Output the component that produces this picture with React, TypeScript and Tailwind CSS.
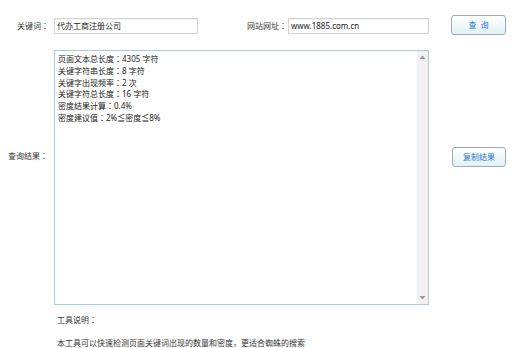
import React from "react";

const font = { fontFamily: '"Noto Sans", "Noto Sans CJK SC", sans-serif' };

function T({ s }: { s: string }) {
  const parts = s.split("：");
  return (
    <>
      {parts.map((p, i) => (
        <React.Fragment key={i}>
          {p}
          {i < parts.length - 1 && (
            <span style={{ fontFamily: '"Noto Sans CJK JP", sans-serif' }}>：</span>
          )}
        </React.Fragment>
      ))}
    </>
  );
}

export default function App() {
  const lines = [
    "页面文本总长度：4305 字符",
    "关键字符串长度：8 字符",
    "关键字出现频率：2 次",
    "关键字符总长度：16 字符",
    "密度结果计算：0.4%",
    "密度建议值：2%≦密度≦8%",
  ];
  return (
    <div className="w-[530px] h-[348px] bg-white text-[8px] text-[#333] overflow-hidden" style={font}>
      {/* Row 1 */}
      <div className="flex items-start mt-[15px] h-[20px]">
        <div className="w-[54px] mt-[3px] h-[16px] leading-[16px] text-right pr-[5px] whitespace-nowrap">
          <T s="关键词：" />
        </div>
        <div className="w-[144px] h-[16px] mt-[3px] border border-[#d4d4d4] leading-[14px] pl-[2px] text-[#222] shadow-[inset_0_1px_1px_rgba(0,0,0,0.06)]">
          代办工商注册公司
        </div>
        <div className="ml-[49px] w-[41px] mt-[3px] h-[16px] leading-[16px] whitespace-nowrap">
          <T s="网站网址：" />
        </div>
        <div className="w-[141px] h-[16px] mt-[3px] border border-[#d4d4d4] leading-[14px] pl-[2px] text-[#222] shadow-[inset_0_1px_1px_rgba(0,0,0,0.06)]">
          www.1885.com.cn
        </div>
        <div className="ml-[22px] w-[55px] h-[20px] rounded-[3px] border border-[#9eabb5] bg-gradient-to-b from-white to-[#e2f2f6] flex items-center justify-center text-[#2a78d2]">
          查&nbsp;&nbsp;询
        </div>
      </div>

      {/* Row 2 */}
      <div className="flex items-start mt-[15px]">
        <div className="w-[54px] mt-[100px] h-[12px] leading-[12px] text-right pr-[6px] whitespace-nowrap">
          <T s="查询结果：" />
        </div>
        <div className="w-[375px] h-[255px] border border-[#a8cbe2] flex">
          <div className="flex-1 pl-[3px] pt-[2px] leading-[11.8px] text-[#222]">
            {lines.map((l) => (
              <div key={l} className="whitespace-nowrap">
                <T s={l} />
              </div>
            ))}
          </div>
          <div className="w-[12px] h-full bg-[#f1f1f1] border-l border-[#f7f7f7] flex flex-col justify-between items-center py-[4px]">
            <svg width="7" height="5" viewBox="0 0 7 5">
              <path d="M3.5 0.5 L6.5 4 L0.5 4 Z" fill="#9a9a9a" />
            </svg>
            <svg width="7" height="5" viewBox="0 0 7 5">
              <path d="M0.5 1 L6.5 1 L3.5 4.5 Z" fill="#9a9a9a" />
            </svg>
          </div>
        </div>
        <div className="ml-[23px] mt-[97px] w-[54px] h-[20px] rounded-[3px] border border-[#9eabb5] bg-gradient-to-b from-white to-[#e2f2f6] flex items-center justify-center text-[#2a78d2]">
          复制结果
        </div>
      </div>

      {/* Description */}
      <div className="ml-[57px] mt-[9px] leading-[12px]">
        <T s="工具说明：" />
      </div>
      <div className="ml-[57px] mt-[11px] leading-[12px] whitespace-nowrap">
        本工具可以快速检测页面关键词出现的数量和密度<span style={{ fontFamily: '"Noto Sans CJK JP", sans-serif' }}>，</span>更适合蜘蛛的搜索
      </div>
    </div>
  );
}
